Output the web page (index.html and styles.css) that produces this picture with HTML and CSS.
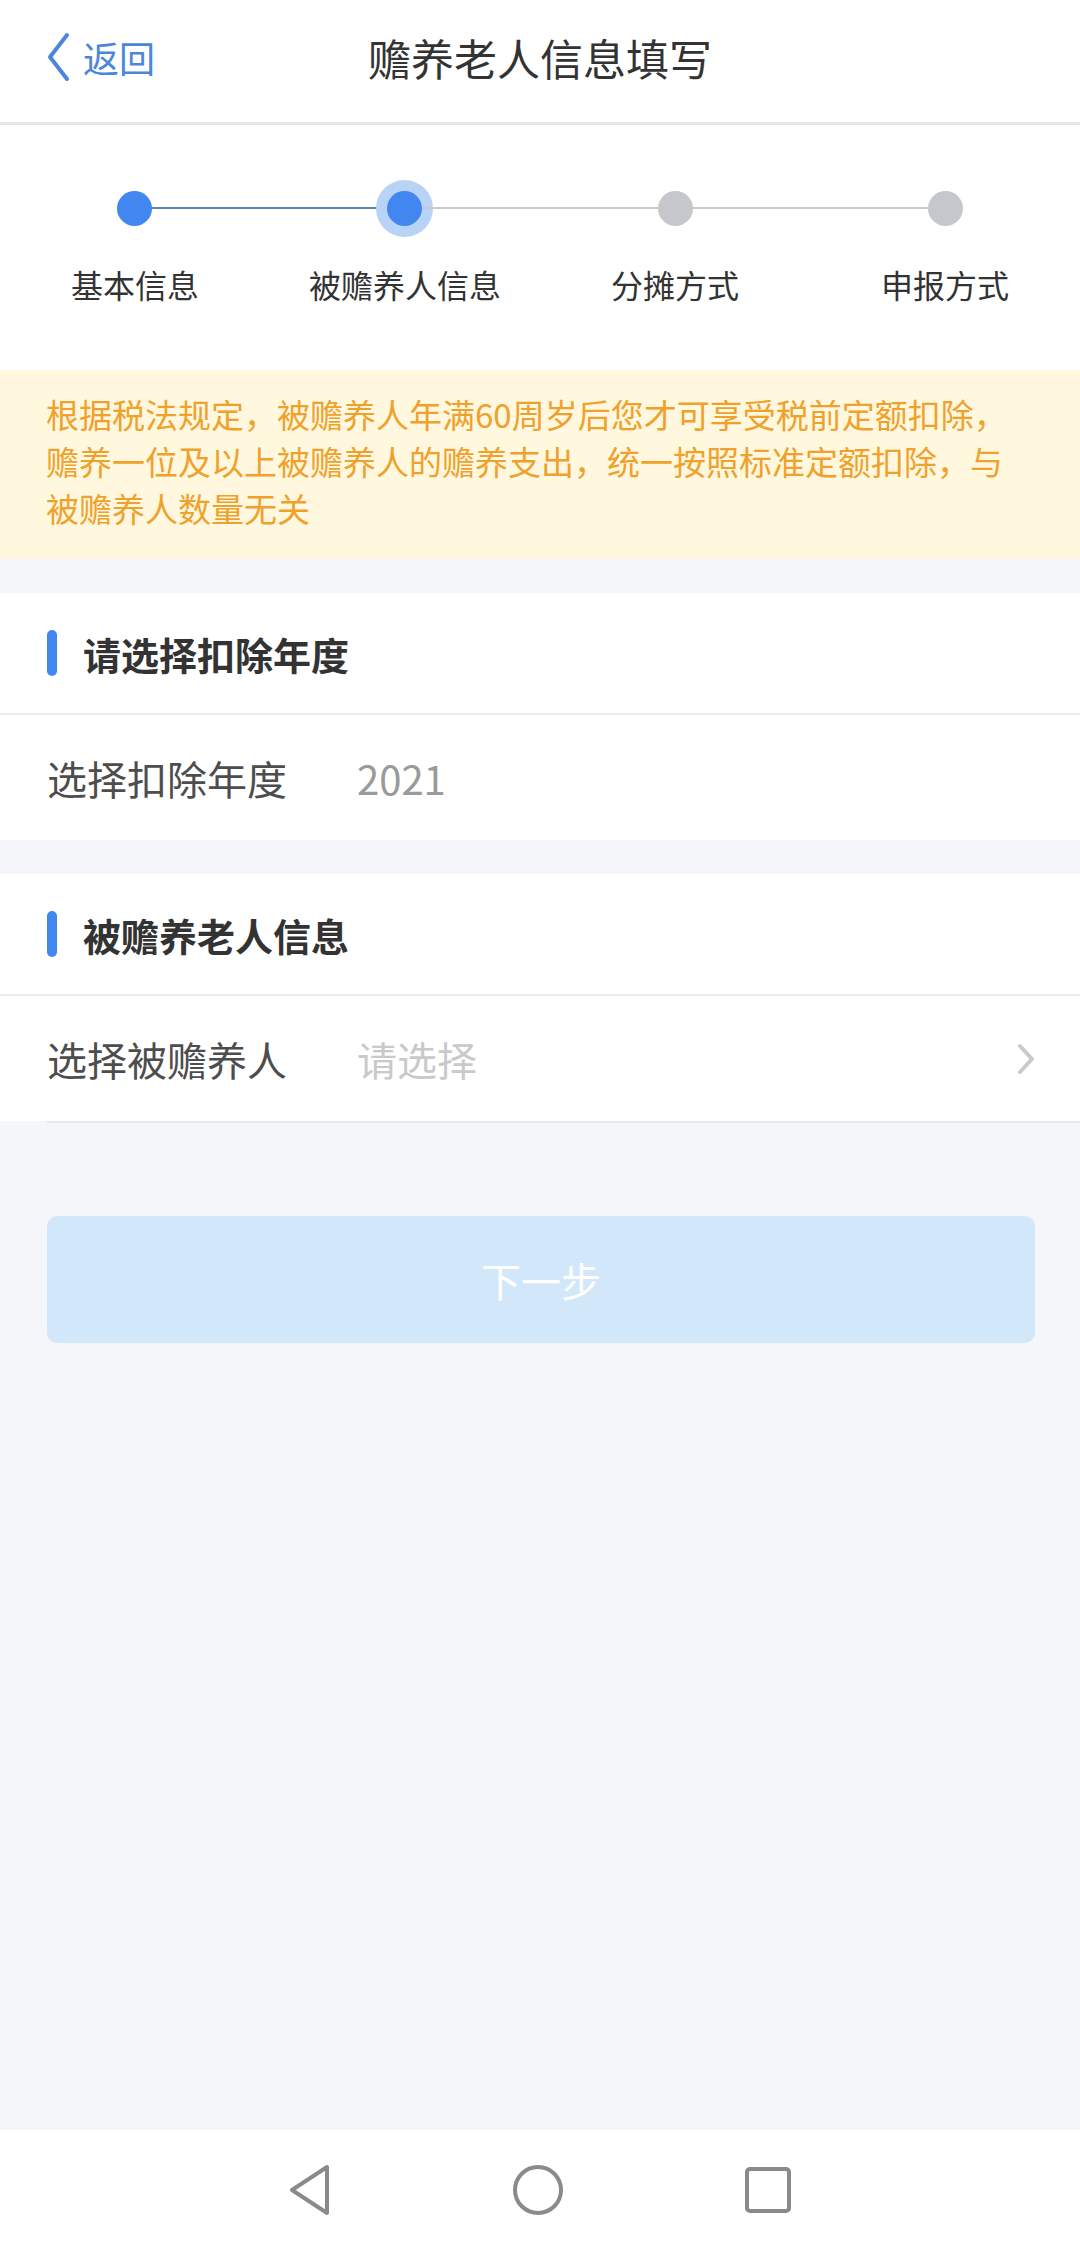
FILE: index.html
```html
<!DOCTYPE html>
<html lang="zh-CN">
<head>
  <meta charset="UTF-8">
  <meta name="viewport" content="width=device-width, initial-scale=1.0">
  <title>赡养老人信息填写</title>
  <link rel="stylesheet" href="styles.css">
</head>
<body>
  <div class="page">
    <header class="topbar">
      <a class="back">
        <svg width="26" height="50" viewBox="0 0 26 50">
          <polyline points="22,3 5,25 22,47" fill="none" stroke="#4a86dc" stroke-width="4" stroke-linecap="round" stroke-linejoin="round"/>
        </svg>
        <span>返回</span>
      </a>
      <h1 class="title">赡养老人信息填写</h1>
      <div></div>
    </header>

    <section class="stepper">
      <div class="track">
        <span class="dot done"></span>
        <span class="line done"></span>
        <span class="dot current"></span>
        <span class="line"></span>
        <span class="dot"></span>
        <span class="line"></span>
        <span class="dot"></span>
      </div>
      <div class="labels">
        <span>基本信息</span>
        <span>被赡养人信息</span>
        <span>分摊方式</span>
        <span>申报方式</span>
      </div>
    </section>

    <div class="notice">
      根据税法规定，被赡养人年满60周岁后您才可享受税前定额扣除，赡养一位及以上被赡养人的赡养支出，统一按照标准定额扣除，与被赡养人数量无关
    </div>

    <section class="card">
      <div class="card-head">
        <span class="bar"></span>
        <span>请选择扣除年度</span>
      </div>
      <div class="row">
        <span class="label">选择扣除年度</span>
        <span class="value">2021</span>
      </div>
    </section>

    <section class="card">
      <div class="card-head">
        <span class="bar"></span>
        <span>被赡养老人信息</span>
      </div>
      <div class="row">
        <span class="label">选择被赡养人</span>
        <span class="value placeholder">请选择</span>
        <svg class="arrow" width="20" height="32" viewBox="0 0 20 32">
          <polyline points="4,3 16,16 4,29" fill="none" stroke="#cacaca" stroke-width="4" stroke-linecap="round" stroke-linejoin="round"/>
        </svg>
      </div>
      <div class="divider"></div>
    </section>

    <button class="next" disabled>下一步</button>

    <div class="spacer"></div>

    <nav class="navbar">
      <svg width="44" height="52" viewBox="0 0 44 52">
        <path d="M39 3 L4 26 L39 49 Z" fill="none" stroke="#8a8a8a" stroke-width="4" stroke-linejoin="round"/>
      </svg>
      <svg width="52" height="52" viewBox="0 0 52 52">
        <circle cx="26" cy="26" r="23" fill="none" stroke="#8a8a8a" stroke-width="4"/>
      </svg>
      <svg width="48" height="48" viewBox="0 0 48 48">
        <rect x="3" y="3" width="42" height="42" rx="3" fill="none" stroke="#8a8a8a" stroke-width="4"/>
      </svg>
    </nav>
  </div>
</body>
</html>
```

FILE: styles.css
```css
* {
  box-sizing: border-box;
}
body {
  margin: 0;
  background: #f5f6fa;
  font-family: "Noto Sans CJK SC", "Noto Sans", sans-serif;
  color: #333;
}
.page {
  min-height: 2249px;
  display: flex;
  flex-direction: column;
}

/* top bar */
.topbar {
  height: 125px;
  background: #fff;
  border-bottom: 3px solid #e6e6e6;
  display: grid;
  grid-template-columns: 1fr auto 1fr;
  align-items: center;
  padding: 0 45px 8px;
}
.back {
  display: flex;
  align-items: center;
  gap: 12px;
  color: #4a86dc;
  font-size: 36px;
}
.title {
  margin: 0;
  font-size: 43px;
  font-weight: 400;
  color: #333;
}

/* stepper */
.stepper {
  background: #fff;
  padding: 54px 0 64px;
}
.track {
  height: 58px;
  display: flex;
  align-items: center;
  padding: 0 117px;
}
.dot {
  width: 35px;
  height: 35px;
  border-radius: 50%;
  background: #c6c7cc;
  flex: none;
}
.dot.done,
.dot.current {
  background: #4286f0;
}
.dot.current {
  box-shadow: 0 0 0 11px #b9d3f6;
}
.line {
  flex: 1;
  height: 2px;
  background: #c9c9cc;
}
.line.done {
  background: #5686bb;
}
.labels {
  display: grid;
  grid-template-columns: repeat(4, 1fr);
  margin-top: 25px;
  font-size: 32px;
  line-height: 44px;
  text-align: center;
  color: #333;
}

/* notice */
.notice {
  background: #fff8de;
  color: #f0a12c;
  font-size: 33px;
  line-height: 47px;
  padding: 21px 46px 27px;
}

/* cards */
.card {
  background: #fff;
  margin-top: 34px;
}
.card-head {
  height: 122px;
  border-bottom: 2px solid #ececec;
  display: flex;
  align-items: center;
  gap: 26px;
  padding-left: 47px;
  font-size: 38px;
  font-weight: 700;
  color: #333;
}
.bar {
  width: 10px;
  height: 46px;
  border-radius: 5px;
  background: #4286f0;
}
.row {
  height: 125px;
  display: flex;
  align-items: center;
  padding: 0 44px 0 47px;
  font-size: 40px;
}
.label {
  width: 310px;
  color: #4d4d4d;
}
.value {
  flex: 1;
  color: #9a9a9a;
}
.value.placeholder {
  color: #c9c9c9;
}
.divider {
  height: 2px;
  margin-left: 47px;
  background: #e8e8e8;
}
.card:last-of-type {
  background: linear-gradient(#fff, #fff) no-repeat 0 0 / 100% calc(100% - 2px);
}

/* button */
.next {
  margin: 93px 45px 0 47px;
  height: 127px;
  border: none;
  border-radius: 10px;
  background: #d3e7fb;
  color: #fff;
  font-family: inherit;
  font-size: 40px;
}

.spacer {
  flex: 1;
}

/* system nav */
.navbar {
  height: 119px;
  background: #fff;
  display: flex;
  justify-content: center;
  align-items: center;
  gap: 180px;
}
```
